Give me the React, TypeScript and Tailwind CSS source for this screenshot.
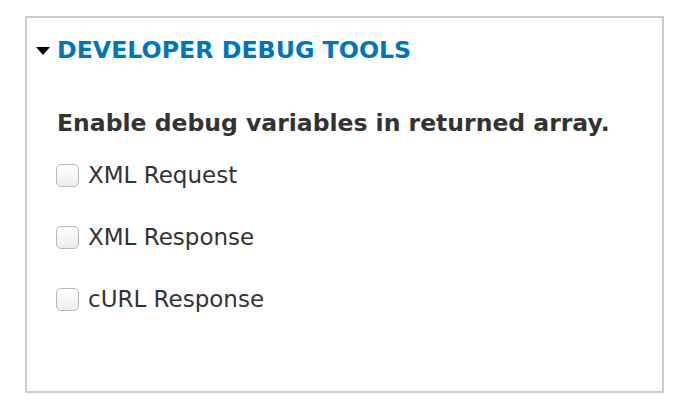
import React from "react";

const font = { fontFamily: '"DejaVu Sans", Verdana, sans-serif' };

function Row({ label }: { label: string }) {
  return (
    <label className="flex items-center h-[24px]">
      <span className="w-[23px] h-[23px] rounded-[5px] border border-[#b8b8b8] bg-gradient-to-b from-white to-[#ededed] shrink-0" />
      <span className="ml-[9px] text-[23px] text-[#333] leading-none">{label}</span>
    </label>
  );
}

export default function App() {
  return (
    <div className="w-[686px] h-[414px] bg-white pt-[16px] pl-[25px]" style={font}>
      <div className="w-[639px] h-[377px] border-2 border-[#cccccc] pl-[9px] pt-[21px]">
        <div className="flex items-center h-[24px]">
          <svg width="14" height="8" viewBox="0 0 14 8" className="mr-[7px]">
            <polygon points="0,0 14,0 7,8" fill="#000" />
          </svg>
          <span className="text-[23.7px] font-bold text-[#0074bd] leading-none">DEVELOPER DEBUG TOOLS</span>
        </div>
        <div className="pl-[20px]">
          <div className="mt-[49px] pl-[1px] text-[23.5px] font-bold text-[#333] leading-none">
            Enable debug variables in returned array.
          </div>
          <div className="mt-[28px] flex flex-col gap-[38px]">
            <Row label="XML Request" />
            <Row label="XML Response" />
            <Row label="cURL Response" />
          </div>
        </div>
      </div>
    </div>
  );
}
